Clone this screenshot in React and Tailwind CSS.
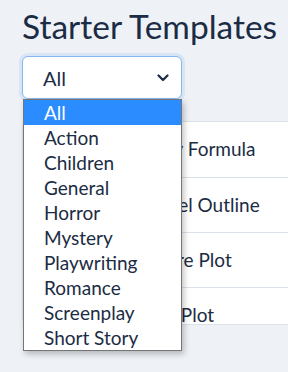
import { useState } from "react";

const categories=["All","Action","Children","General","Horror","Mystery","Playwriting","Romance","Screenplay","Short Story"];
const templates=["Classic Mystery Formula","Snowflake Novel Outline","Space Adventure Plot","Single Mystery Plot","Hero's Journey"];

function App(){
const [selected]=useState("All");
return (
<div className="min-h-[372px] bg-[#eef2f7] font-['Lato',sans-serif] text-[#1b2c44] overflow-hidden">
    <div className="pl-[22px] pt-[4px]">
        <h1 className="text-[33.5px] leading-[44px] font-normal whitespace-nowrap">Starter Templates</h1>
        <div className="relative mt-[8px] w-[160px]">
            <div className="h-[43px] w-[160px] rounded-[6px] border border-[#86b7ef] bg-white shadow-[0_0_0_3px_rgba(147,190,240,0.25)] flex items-center justify-between pl-[20px] pr-[12px] text-[20px]">
                <span>{selected}</span>
                <svg width="12" height="8" viewBox="0 0 12 8" fill="none"><path d="M1.5 1.5 6 6l4.5-4.5" stroke="#1b2c44" strokeWidth="2.2" strokeLinecap="round" strokeLinejoin="round"/></svg>
            </div>
            <ul className="absolute left-[1px] top-[43px] z-10 w-[159px] border border-[#767676] bg-white shadow-[2px_3px_6px_rgba(0,0,0,0.25)] text-[19px] leading-[25px]">
                {categories.map(c=>(
                    <li key={c} className={`pl-[20px] h-[25px] ${c===selected?'bg-[#2a8cff] text-white':''}`}>{c}</li>
                ))}
            </ul>
        </div>
        <div className="mt-[22px] h-[204px] overflow-hidden rounded-l-[6px] border-y border-l border-[#dce2e9] bg-white text-[19px]">
            {templates.map((t,i)=>(
                <div key={t} className={`h-[55px] flex items-center pl-[30px] whitespace-nowrap ${i>0?'border-t border-[#dce2e9]':''}`}>{t}</div>
            ))}
        </div>
    </div>
</div>
);
}

export default App;
